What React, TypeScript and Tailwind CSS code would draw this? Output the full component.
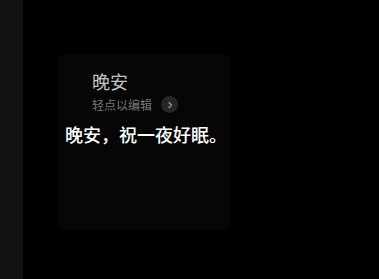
export default function App() {
  return (
    <div
      className="flex h-[279px] w-[379px] overflow-hidden bg-black"
      style={{ fontFamily: '"Noto Sans CJK SC", "Noto Sans", sans-serif' }}
    >
      <div className="h-full w-[23px] shrink-0 bg-[#111111]" />
      <div className="relative flex-1">
        <div className="ml-[34px] mt-[54px] h-[176px] w-[174px] rounded-[6px] bg-[#060606] pl-[35px] pt-[16px]">
          <p className="text-[18px] leading-[22px] text-[#c4c4c4]">晚安</p>
          <div className="mt-[4px] flex items-center">
            <span className="text-[12px] leading-[16px] text-[#787878]">轻点以编辑</span>
            <span className="ml-[9px] flex h-[17px] w-[17px] items-center justify-center rounded-full bg-[#262626]">
              <svg width="8" height="8" viewBox="0 0 8 8" fill="none">
                <path d="M3 1.5 L5.5 4 L3 6.5" stroke="#9a9a9a" strokeWidth="1.2" strokeLinecap="round" strokeLinejoin="round" />
              </svg>
            </span>
          </div>
        </div>
        <p className="absolute left-[42px] top-[122px] whitespace-nowrap text-[18px] font-medium leading-[24px] text-white">
          晚安，祝一夜好眠。
        </p>
      </div>
    </div>
  );
}
